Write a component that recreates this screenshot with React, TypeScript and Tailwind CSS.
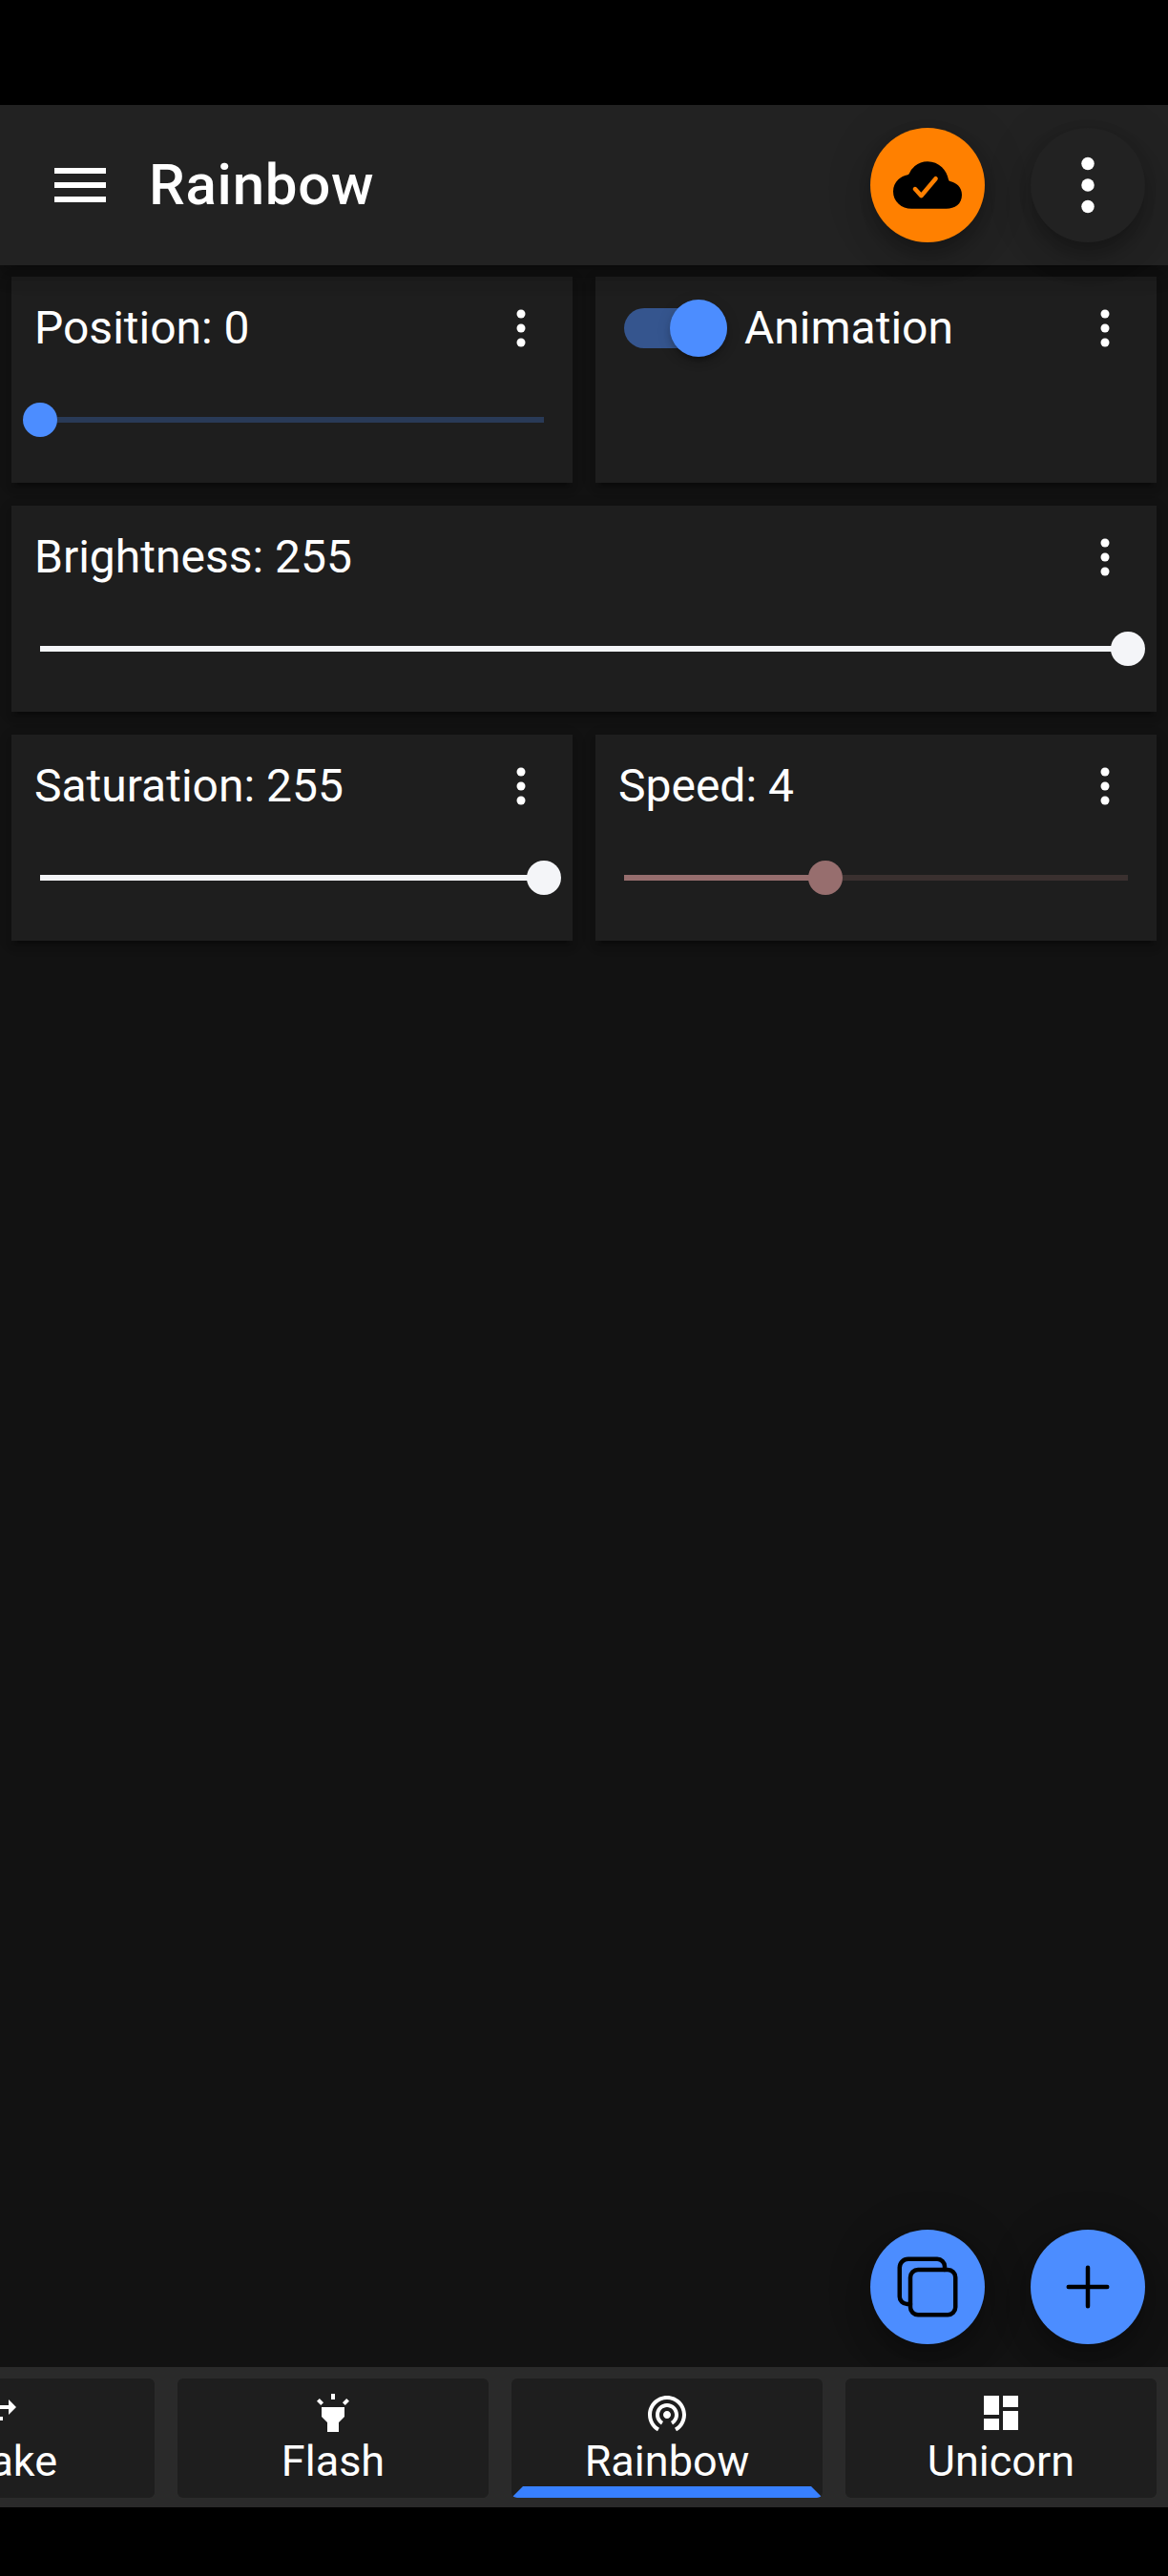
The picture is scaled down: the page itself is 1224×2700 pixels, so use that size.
import type { ReactNode } from "react";
import { MdDashboard, MdHighlight, MdMenu, MdSwapHoriz, MdWifiTethering } from "react-icons/md";
import { IoAddOutline, IoCloudDone, IoCopyOutline, IoEllipsisVertical } from "react-icons/io5";

const FAB =
  "flex size-[120px] items-center justify-center rounded-full shadow-[0_9px_15px_-3px_rgba(0,0,0,0.2),0_18px_30px_0_rgba(0,0,0,0.14),0_3px_54px_0_rgba(0,0,0,0.12)]";

function Card({ title, leading, wide, children }: { title: string; leading?: ReactNode; wide?: boolean; children?: ReactNode }) {
  return (
    <section
      className={`h-[216px] bg-[#1e1e1e] shadow-[0_9px_3px_-6px_rgba(0,0,0,0.2),0_6px_6px_0_rgba(0,0,0,0.14),0_3px_15px_0_rgba(0,0,0,0.12)] ${wide ? "col-span-2" : ""}`}
    >
      <div className="flex h-[108px] items-center pr-[30px] pl-6">
        {leading}
        <h2 className="flex-1 text-[48px] leading-none">{title}</h2>
        <button aria-label={`${title} options`}>
          <IoEllipsisVertical className="size-12" />
        </button>
      </div>
      {children}
    </section>
  );
}

function Slider({ value, fill, track }: { value: number; fill: string; track: string }) {
  return (
    <div className="px-[30px] pt-6">
      <div className="flex h-9 items-center">
        <div className={`relative h-1.5 w-full ${track}`}>
          <div className={`h-1.5 ${fill}`} style={{ width: `${value}%` }} />
          <div className={`absolute -top-[15px] size-9 -translate-x-1/2 rounded-full ${fill}`} style={{ left: `${value}%` }} />
        </div>
      </div>
    </div>
  );
}

function Toggle() {
  return (
    <div className="mr-[18px] ml-1.5 flex h-[42px] w-[108px] items-center justify-end rounded-full bg-[#35558e]">
      <div className="size-[60px] shrink-0 rounded-full bg-[#4c8dff] shadow-[0_9px_3px_-6px_rgba(0,0,0,0.2),0_6px_6px_0_rgba(0,0,0,0.14),0_3px_15px_0_rgba(0,0,0,0.12)]" />
    </div>
  );
}

function Tab({ label, icon, active }: { label: string; icon: ReactNode; active?: boolean }) {
  return (
    <button
      className={`flex h-[125px] w-[326px] shrink-0 flex-col items-center rounded-[6px] bg-[#1e1e1e] ${
        active ? "border-x-12 border-b-12 border-x-transparent border-b-[#3880ff]" : ""
      }`}
    >
      <span className="mt-3 text-[48px] leading-none">{icon}</span>
      <span className="text-[45px] leading-[53px]">{label}</span>
    </button>
  );
}

export default function App() {
  return (
    <div className="flex h-[2700px] w-[1224px] flex-col overflow-hidden bg-black pt-[110px] pb-[72px] font-[Roboto,sans-serif] text-white">
      <header className="relative z-10 flex h-[168px] shrink-0 items-center bg-[#222222] pr-6 pl-12 shadow-[0_6px_12px_-3px_rgba(0,0,0,0.2),0_12px_15px_0_rgba(0,0,0,0.14),0_3px_30px_0_rgba(0,0,0,0.12)]">
        <MdMenu className="size-[72px]" />
        <h1 className="ml-9 flex-1 text-[60px] leading-none font-medium tracking-[0.0125em]">Rainbow</h1>
        <div className="flex gap-12">
          <button aria-label="Connected" className={`${FAB} bg-[#ff8000] text-black`}>
            <IoCloudDone className="size-[72px]" />
          </button>
          <button aria-label="Menu" className={`${FAB} bg-[#222222]`}>
            <IoEllipsisVertical className="size-[72px]" />
          </button>
        </div>
      </header>

      <main className="relative flex-1 bg-[#121212] p-3">
        <div className="grid grid-cols-2 gap-6">
          <Card title="Position: 0">
            <Slider value={0} fill="bg-[#4c8dff]" track="bg-[#293a57]" />
          </Card>
          <Card title="Animation" leading={<Toggle />} />
          <Card title="Brightness: 255" wide>
            <Slider value={100} fill="bg-[#f4f5f8]" track="bg-[#f4f5f8]" />
          </Card>
          <Card title="Saturation: 255">
            <Slider value={100} fill="bg-[#f4f5f8]" track="bg-[#f4f5f8]" />
          </Card>
          <Card title="Speed: 4">
            <Slider value={40} fill="bg-[#976e6e]" track="bg-[#3a302f]" />
          </Card>
        </div>
        <div className="absolute right-6 bottom-6 flex gap-12 text-black">
          <button aria-label="Duplicate" className={`${FAB} bg-[#4c8dff]`}>
            <IoCopyOutline className="size-[72px]" />
          </button>
          <button aria-label="Add" className={`${FAB} bg-[#4c8dff]`}>
            <IoAddOutline className="size-[72px]" />
          </button>
        </div>
      </main>

      <nav className="relative flex h-[147px] shrink-0 justify-end gap-6 bg-[#2a2a2a] px-3 pt-3">
        <Tab label="Shake" icon={<MdSwapHoriz />} />
        <Tab label="Flash" icon={<MdHighlight />} />
        <Tab label="Rainbow" icon={<MdWifiTethering />} active />
        <Tab label="Unicorn" icon={<MdDashboard />} />
      </nav>
    </div>
  );
}
